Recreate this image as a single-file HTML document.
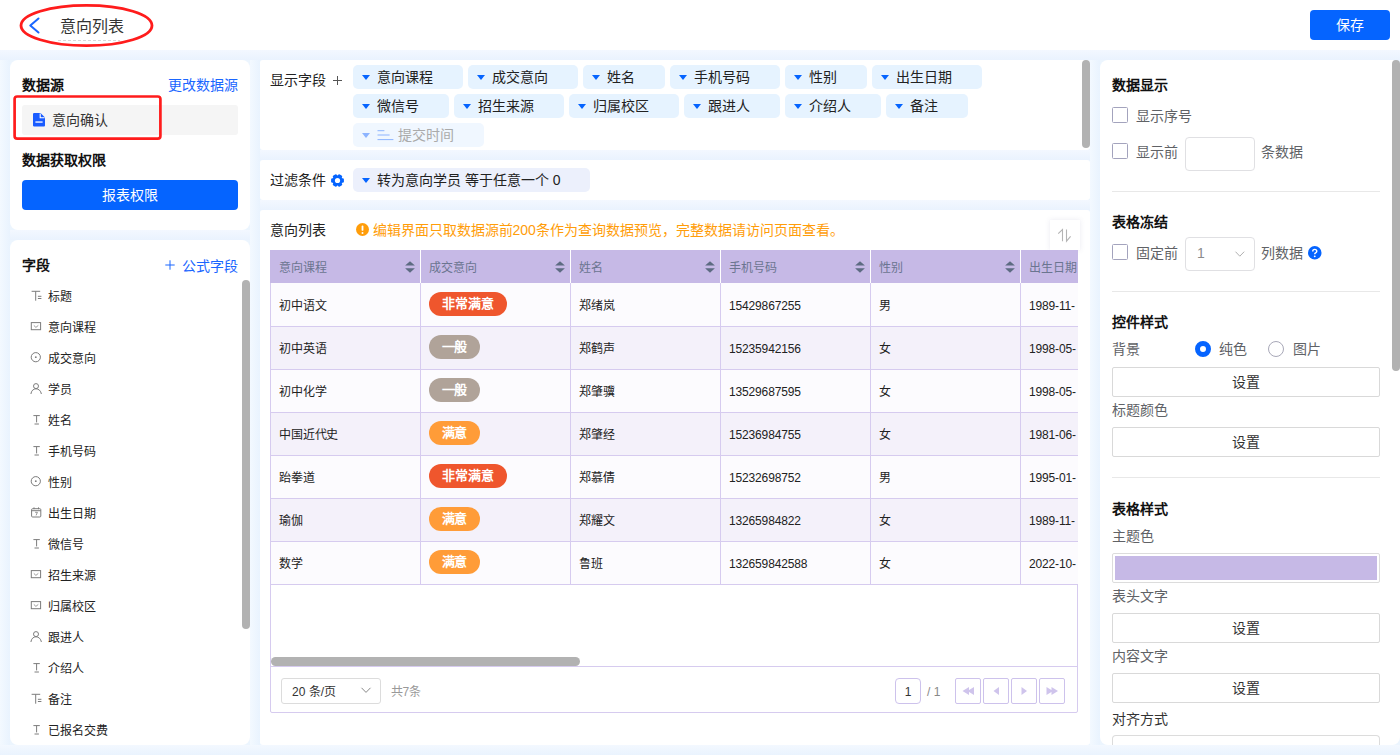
<!DOCTYPE html>
<html lang="zh-CN">
<head>
<meta charset="utf-8">
<title>意向列表</title>
<style>
*{box-sizing:border-box;margin:0;padding:0}
html,body{width:1400px;height:755px;overflow:hidden}
body{position:relative;background:#ecf5fe;font-family:"Liberation Sans",sans-serif;font-size:14px;color:#222;line-height:1}
.a{position:absolute}
.t{position:absolute;white-space:nowrap;height:20px;line-height:20px}
.b{font-weight:bold;color:#111}
.blue{color:#1a66ff}
.panel{position:absolute;background:#fff;border-radius:8px}
.mp{position:absolute;background:#fff;border-radius:3px;left:260px;width:830px}
svg{position:absolute;overflow:visible}
/* header */
#hdr{left:0;top:0;width:1400px;height:50px;background:#fff}
.vs{position:absolute;top:50px;width:10px;height:705px;background:linear-gradient(90deg,#f3f9ff,#e9f3fe)}
.hs{position:absolute;height:10px;background:linear-gradient(#f3f8ff,#eaf3fe)}
.btnblue{position:absolute;background:#0564ff;color:#fff;border-radius:4px;text-align:center;font-size:14px}
/* field list */
.fi{position:absolute;left:48px;font-size:12px;height:20px;line-height:20px;color:#222;white-space:nowrap}
.ic{left:30px;width:12px;height:12px}
.ic *{fill:none;stroke:#7c7c7c;stroke-width:1}
/* chips */
.chip{position:absolute;height:24px;line-height:24px;border-radius:5px;background:#e6f3ff;font-size:14px;color:#222;padding-left:24px;white-space:nowrap}
.chip:before{content:"";position:absolute;left:8.5px;top:10px;border-left:4.5px solid transparent;border-right:4.5px solid transparent;border-top:5px solid #0564ff}
.chip.dis{background:#f0f7ff;color:#aaa}
.chip.dis:before{border-top-color:#8db4ff}
/* table */
.th{position:absolute;top:250px;height:33px;line-height:37px;width:150px;background:#c6b9e6;border-right:1px solid #fff;font-size:12px;color:#6b7590;padding-left:8px;white-space:nowrap;overflow:hidden}
.td{position:absolute;height:43px;line-height:44px;width:150px;border-right:1px solid #d6cbef;border-bottom:1px solid #d6cbef;font-size:12px;color:#222;padding-left:8px;white-space:nowrap;overflow:hidden}
.td{letter-spacing:-.15px}.odd{background:#fcfbfe}.even{background:#f4f1fa}
.tag{position:absolute;left:8px;top:8px;height:24px;line-height:24px;border-radius:12px;color:#fff;font-weight:bold;font-size:13px;text-align:center}
.tr{background:#ef562d;width:78px}.tg{background:#b0a399;width:51px}.to{background:#ff9c38;width:51px}
.srt{top:10.5px;width:10px;height:12px}
.pg{position:absolute;top:678px;width:26px;height:26px;border:1px solid #cdc2ec;border-radius:2px}
/* right */
.lab{position:absolute;white-space:nowrap;height:20px;line-height:20px;color:#606266;font-size:14px}
.cb{position:absolute;left:1112px;width:16px;height:16px;border:1px solid #a3a3bd;border-radius:1.5px;background:#fff}
.hr{position:absolute;left:1112px;width:268px;height:1px;background:#e8e8e8}
.setb{position:absolute;left:1112px;width:268px;height:30px;line-height:28px;border:1px solid #d9d9d9;border-radius:2px;text-align:center;font-size:14px;color:#333;background:#fff}
</style>
</head>
<body>
<!-- ===== header ===== -->
<div class="a" id="hdr"></div>
<div class="vs" style="left:0"></div><div class="vs" style="left:250px"></div><div class="vs" style="left:1090px"></div>
<div class="hs" style="left:0;top:50px;width:1400px"></div><div class="hs" style="left:260px;top:150px;width:830px"></div><div class="hs" style="left:260px;top:200px;width:830px"></div><div class="hs" style="left:10px;top:230px;width:240px"></div><div class="hs" style="left:0;top:745px;width:1400px"></div>
<svg class="a" style="left:0;top:0" width="180" height="50">
  <polyline points="38.5,18.5 30.3,25.5 38.5,32.5" fill="none" stroke="#1a66ff" stroke-width="2" stroke-linecap="round" stroke-linejoin="round"/>
  <line x1="58" y1="40.5" x2="120" y2="40.5" stroke="#d8d8d8" stroke-width="1" stroke-dasharray="3,2"/>
  <ellipse cx="86.5" cy="25.5" rx="65.5" ry="20.2" fill="none" stroke="#ff1c1c" stroke-width="2.8"/>
</svg>
<div class="t" style="left:60px;top:17px;font-size:16px;color:#333">意向列表</div>
<div class="btnblue" style="left:1310px;top:10px;width:80px;height:30px;line-height:30px">保存</div>

<!-- ===== left panel 1 ===== -->
<div class="panel" style="left:10px;top:60px;width:240px;height:170px"></div>
<div class="t b" style="left:22px;top:75px">数据源</div>
<div class="t blue" style="left:168px;top:75px">更改数据源</div>
<div class="a" style="left:22px;top:105px;width:216px;height:30px;background:#f5f5f5;border-radius:3px"></div>
<svg class="a" style="left:33px;top:113px" width="12" height="14" viewBox="0 0 12 14">
  <path d="M1.2 0H7.5L12 4.5V12.6Q12 13.6 11 13.6H1.2Q0 13.6 0 12.6V1Q0 0 1.2 0Z" fill="#1a5cff"/>
  <path d="M7.2 0.6V4.8H11.6" fill="none" stroke="#fff" stroke-width="1.1"/>
  <rect x="2.4" y="8.4" width="7.2" height="1.3" fill="#fff"/>
</svg>
<div class="t" style="left:52px;top:110px;color:#333">意向确认</div>
<svg class="a" style="left:0;top:90px" width="170" height="56"><rect x="14.6" y="6.5" width="145.8" height="42.2" rx="2.6" fill="none" stroke="#ff1c1c" stroke-width="2.7"/></svg>
<div class="t b" style="left:22px;top:150px">数据获取权限</div>
<div class="btnblue" style="left:22px;top:180px;width:216px;height:30px;line-height:30px">报表权限</div>

<!-- ===== left panel 2 ===== -->
<div class="panel" style="left:10px;top:240px;width:240px;height:505px"></div>
<div class="t b" style="left:22px;top:254.5px">字段</div>
<svg class="a" style="left:165px;top:260px" width="10" height="10"><path d="M5 0.3V9.7M0.3 5H9.7" stroke="#1a66ff" stroke-width="1" fill="none"/></svg>
<div class="t blue" style="left:182px;top:255.5px">公式字段</div>
<div class="a" style="left:242px;top:280px;width:8px;height:349px;background:#b2b2b2;border-radius:4px"></div>
<svg class="a" width="0" height="0" style="left:0;top:0"><defs>
<symbol id="tt" viewBox="0 0 12 12"><path d="M1.6 2.3H10.2M5.7 2.3V11.7M7.9 7.3H11.4M7.9 9.5H11.4"/></symbol>
<symbol id="dd" viewBox="0 0 12 12"><rect x="1.3" y="2.6" width="9.3" height="7.1"/><path d="M3.8 5.4L5.9 7.4L8.3 5.4" style="stroke:#9a9a9a"/></symbol>
<symbol id="rd" viewBox="0 0 12 12"><circle cx="5.8" cy="6.2" r="4.6"/><circle cx="5.8" cy="6.2" r="0.9" style="fill:#7c7c7c;stroke:none"/></symbol>
<symbol id="us" viewBox="0 0 12 12"><circle cx="6" cy="4.1" r="2.5"/><path d="M0.9 12C1.3 8.6 3.5 6.8 6 6.8S10.8 8.6 11.4 12"/></symbol>
<symbol id="tx" viewBox="0 0 12 12"><path d="M3.4 2.6H9.8M6.6 2.6V9.4M4.5 11H8.9"/></symbol>
<symbol id="dt" viewBox="0 0 12 12"><rect x="1.6" y="2.7" width="9.2" height="8.3" rx="1"/><path d="M1.6 4.7H10.8M4 1.4V3.2M8.5 1.4V3.2"/><path d="M5.1 6.3H7.4L6.1 9.4" style="stroke-width:.8"/></symbol>
</defs></svg>
<svg class="a ic" style="top:289px"><use href="#tt"/></svg><div class="fi" style="top:287px">标题</div>
<svg class="a ic" style="top:320px"><use href="#dd"/></svg><div class="fi" style="top:318px">意向课程</div>
<svg class="a ic" style="top:351px"><use href="#rd"/></svg><div class="fi" style="top:349px">成交意向</div>
<svg class="a ic" style="top:382px"><use href="#us"/></svg><div class="fi" style="top:380px">学员</div>
<svg class="a ic" style="top:413px"><use href="#tx"/></svg><div class="fi" style="top:411px">姓名</div>
<svg class="a ic" style="top:444px"><use href="#tx"/></svg><div class="fi" style="top:442px">手机号码</div>
<svg class="a ic" style="top:475px"><use href="#rd"/></svg><div class="fi" style="top:473px">性别</div>
<svg class="a ic" style="top:506px"><use href="#dt"/></svg><div class="fi" style="top:504px">出生日期</div>
<svg class="a ic" style="top:537px"><use href="#tx"/></svg><div class="fi" style="top:535px">微信号</div>
<svg class="a ic" style="top:568px"><use href="#dd"/></svg><div class="fi" style="top:566px">招生来源</div>
<svg class="a ic" style="top:599px"><use href="#dd"/></svg><div class="fi" style="top:597px">归属校区</div>
<svg class="a ic" style="top:630px"><use href="#us"/></svg><div class="fi" style="top:628px">跟进人</div>
<svg class="a ic" style="top:661px"><use href="#tx"/></svg><div class="fi" style="top:659px">介绍人</div>
<svg class="a ic" style="top:692px"><use href="#tt"/></svg><div class="fi" style="top:690px">备注</div>
<svg class="a ic" style="top:723px"><use href="#tx"/></svg><div class="fi" style="top:721px">已报名交费</div>

<div class="mp" style="top:60px;height:90px"></div>
<div class="mp" style="top:160px;height:40px"></div>
<div class="mp" style="top:210px;height:535px"></div>
<div class="t" style="left:270px;top:69.5px">显示字段</div>
<svg class="a" style="left:333px;top:75.5px" width="9" height="9"><path d="M4.5 0V9M0 4.5H9" stroke="#555" stroke-width="1" fill="none"/></svg>
<div class="chip" style="left:353px;top:65px;width:110px">意向课程</div>
<div class="chip" style="left:468px;top:65px;width:110px">成交意向</div>
<div class="chip" style="left:583px;top:65px;width:82px">姓名</div>
<div class="chip" style="left:670px;top:65px;width:110px">手机号码</div>
<div class="chip" style="left:785px;top:65px;width:82px">性别</div>
<div class="chip" style="left:872px;top:65px;width:110px">出生日期</div>
<div class="chip" style="left:353px;top:94px;width:96px">微信号</div>
<div class="chip" style="left:454px;top:94px;width:110px">招生来源</div>
<div class="chip" style="left:569px;top:94px;width:110px">归属校区</div>
<div class="chip" style="left:684px;top:94px;width:96px">跟进人</div>
<div class="chip" style="left:785px;top:94px;width:96px">介绍人</div>
<div class="chip" style="left:886px;top:94px;width:82px">备注</div>
<div class="chip dis" style="left:353px;top:123px;width:131px;padding-left:44.5px">提交时间</div>
<svg class="a" style="left:377px;top:130px" width="17" height="11"><path d="M0.5 0.7H7.4M0.5 5H12.6M0.5 9.6H16.4" stroke="#8db4ff" stroke-width="1" fill="none"/></svg>
<div class="a" style="left:1082px;top:60px;width:8px;height:88px;background:#b2b2b2;border-radius:4px"></div>
<div class="t" style="left:270px;top:170px">过滤条件</div>
<svg class="a" style="left:331px;top:173.5px" width="13" height="13" viewBox="-6.5 -6.5 13 13"><g fill="#0564ff"><circle r="4.9"/><g id="gt"><rect x="-6.4" y="-2.3" width="12.8" height="4.6" rx="1.3"/></g><use href="#gt" transform="rotate(60)"/><use href="#gt" transform="rotate(120)"/></g><circle r="2.6" fill="#fff"/></svg>
<div class="chip" style="left:353px;top:168px;width:237px;background:#ecf0fc">转为意向学员 等于任意一个 0</div>
<div class="t" style="left:270px;top:220px">意向列表</div>
<svg class="a" style="left:356px;top:223.3px" width="13" height="13" viewBox="0 0 13 13"><circle cx="6.5" cy="6.5" r="6.5" fill="#ff9d0a"/><rect x="5.6" y="2.6" width="1.8" height="5.2" rx=".9" fill="#fff"/><circle cx="6.5" cy="9.9" r="1" fill="#fff"/></svg>
<div class="t" style="left:372.5px;top:220px;color:#ff9d0a">编辑界面只取数据源前200条作为查询数据预览，完整数据请访问页面查看。</div>
<div class="a" style="left:1050px;top:220px;width:30px;height:30px;background:#fff;box-shadow:0 0 5px rgba(120,120,160,.16)"></div>
<svg class="a" style="left:1050px;top:220px" width="30" height="30"><path d="M12.5 21.2V9.6L8.2 13.6M16.5 9.6V21.2L20.6 16.4" fill="none" stroke="#b4b4b4" stroke-width="1.1"/></svg>
<div class="a" style="left:270px;top:250px;width:808px;height:463px;border:1px solid #d6cbef;border-radius:0 0 2px 2px;background:#fff"></div>
<div class="a" id="tbl" style="left:270px;top:0;width:807.5px;height:755px;overflow:hidden">
<div class="th" style="left:0;width:151px;padding-left:9px">意向课程<svg class="a srt" style="left:135px" viewBox="0 0 10 12"><path d="M5 0.3L9.9 4.6H0.1ZM0.1 7.2H9.9L5 11.7Z" fill="#5d6b82"/></svg></div>
<div class="th" style="left:151px">成交意向<svg class="a srt" style="left:134px" viewBox="0 0 10 12"><path d="M5 0.3L9.9 4.6H0.1ZM0.1 7.2H9.9L5 11.7Z" fill="#5d6b82"/></svg></div>
<div class="th" style="left:301px">姓名<svg class="a srt" style="left:134px" viewBox="0 0 10 12"><path d="M5 0.3L9.9 4.6H0.1ZM0.1 7.2H9.9L5 11.7Z" fill="#5d6b82"/></svg></div>
<div class="th" style="left:451px">手机号码<svg class="a srt" style="left:134px" viewBox="0 0 10 12"><path d="M5 0.3L9.9 4.6H0.1ZM0.1 7.2H9.9L5 11.7Z" fill="#5d6b82"/></svg></div>
<div class="th" style="left:601px">性别<svg class="a srt" style="left:134px" viewBox="0 0 10 12"><path d="M5 0.3L9.9 4.6H0.1ZM0.1 7.2H9.9L5 11.7Z" fill="#5d6b82"/></svg></div>
<div class="th" style="left:751px">出生日期<svg class="a srt" style="left:134px" viewBox="0 0 10 12"><path d="M5 0.3L9.9 4.6H0.1ZM0.1 7.2H9.9L5 11.7Z" fill="#5d6b82"/></svg></div>
<div class="td odd" style="left:0;top:284px;width:151px;border-left:1px solid #d6cbef;">初中语文</div>
<div class="td odd" style="left:151px;top:284px;"><span class="tag tr">非常满意</span></div>
<div class="td odd" style="left:301px;top:284px;">郑绪岚</div>
<div class="td odd" style="left:451px;top:284px;">15429867255</div>
<div class="td odd" style="left:601px;top:284px;">男</div>
<div class="td odd" style="left:751px;top:284px;">1989-11-</div>
<div class="td even" style="left:0;top:327px;width:151px;border-left:1px solid #d6cbef;">初中英语</div>
<div class="td even" style="left:151px;top:327px;"><span class="tag tg">一般</span></div>
<div class="td even" style="left:301px;top:327px;">郑鹤声</div>
<div class="td even" style="left:451px;top:327px;">15235942156</div>
<div class="td even" style="left:601px;top:327px;">女</div>
<div class="td even" style="left:751px;top:327px;">1998-05-</div>
<div class="td odd" style="left:0;top:370px;width:151px;border-left:1px solid #d6cbef;">初中化学</div>
<div class="td odd" style="left:151px;top:370px;"><span class="tag tg">一般</span></div>
<div class="td odd" style="left:301px;top:370px;">郑肇骥</div>
<div class="td odd" style="left:451px;top:370px;">13529687595</div>
<div class="td odd" style="left:601px;top:370px;">女</div>
<div class="td odd" style="left:751px;top:370px;">1998-05-</div>
<div class="td even" style="left:0;top:413px;width:151px;border-left:1px solid #d6cbef;">中国近代史</div>
<div class="td even" style="left:151px;top:413px;"><span class="tag to">满意</span></div>
<div class="td even" style="left:301px;top:413px;">郑肇经</div>
<div class="td even" style="left:451px;top:413px;">15236984755</div>
<div class="td even" style="left:601px;top:413px;">女</div>
<div class="td even" style="left:751px;top:413px;">1981-06-</div>
<div class="td odd" style="left:0;top:456px;width:151px;border-left:1px solid #d6cbef;">跆拳道</div>
<div class="td odd" style="left:151px;top:456px;"><span class="tag tr">非常满意</span></div>
<div class="td odd" style="left:301px;top:456px;">郑慕倩</div>
<div class="td odd" style="left:451px;top:456px;">15232698752</div>
<div class="td odd" style="left:601px;top:456px;">男</div>
<div class="td odd" style="left:751px;top:456px;">1995-01-</div>
<div class="td even" style="left:0;top:499px;width:151px;border-left:1px solid #d6cbef;">瑜伽</div>
<div class="td even" style="left:151px;top:499px;"><span class="tag to">满意</span></div>
<div class="td even" style="left:301px;top:499px;">郑耀文</div>
<div class="td even" style="left:451px;top:499px;">13265984822</div>
<div class="td even" style="left:601px;top:499px;">女</div>
<div class="td even" style="left:751px;top:499px;">1989-11-</div>
<div class="td odd" style="left:0;top:542px;width:151px;border-left:1px solid #d6cbef;">数学</div>
<div class="td odd" style="left:151px;top:542px;"><span class="tag to">满意</span></div>
<div class="td odd" style="left:301px;top:542px;">鲁班</div>
<div class="td odd" style="left:451px;top:542px;">132659842588</div>
<div class="td odd" style="left:601px;top:542px;">女</div>
<div class="td odd" style="left:751px;top:542px;">2022-10-</div>
<div class="a" style="left:0;top:283px;width:808px;height:1px;background:#fcfbfe"></div>
<div class="a" style="left:0px;top:283px;width:1px;height:1px;background:#d6cbef"></div>
<div class="a" style="left:150px;top:283px;width:1px;height:1px;background:#d6cbef"></div>
<div class="a" style="left:300px;top:283px;width:1px;height:1px;background:#d6cbef"></div>
<div class="a" style="left:450px;top:283px;width:1px;height:1px;background:#d6cbef"></div>
<div class="a" style="left:600px;top:283px;width:1px;height:1px;background:#d6cbef"></div>
<div class="a" style="left:750px;top:283px;width:1px;height:1px;background:#d6cbef"></div>
</div>
<div class="a" style="left:271px;top:657px;width:309px;height:9px;background:#b2b2b2;border-radius:4.5px"></div>
<div class="a" style="left:271px;top:666px;width:806px;height:1px;background:#d6cbef"></div>
<div class="a" style="left:281px;top:678px;width:100px;height:26px;border:1px solid #dcdcdc;border-radius:3px;background:#fff"></div>
<div class="t" style="left:292px;top:682px;font-size:12px;color:#333">20 条/页</div>
<svg class="a" style="left:361px;top:687px" width="10" height="7"><path d="M0.5 0.8L5 5.4L9.5 0.8" fill="none" stroke="#888" stroke-width="1"/></svg>
<div class="t" style="left:390.5px;top:682px;font-size:12px;color:#999">共7条</div>
<div class="pg" style="left:895px;border-radius:4px;text-align:center;line-height:26px;font-size:12px;color:#333">1</div>
<div class="t" style="left:927px;top:682px;font-size:12px;color:#888">/ 1</div>
<div class="pg" style="left:955px"><svg class="a" style="left:6px;top:8px" width="12" height="8" fill="#cfc4ec"><path d="M7 0L0.5 4L7 8ZM12 0L5.5 4L12 8Z"/></svg></div>
<div class="pg" style="left:983px"><svg class="a" style="left:6px;top:8px" width="12" height="8" fill="#cfc4ec"><path d="M9 0L3.5 4L9 8Z"/></svg></div>
<div class="pg" style="left:1011px"><svg class="a" style="left:6px;top:8px" width="12" height="8" fill="#cfc4ec"><path d="M3.5 0L9 4L3.5 8Z"/></svg></div>
<div class="pg" style="left:1039px"><svg class="a" style="left:6px;top:8px" width="12" height="8" fill="#cfc4ec"><path d="M0.5 0L7 4L0.5 8ZM5.5 0L12 4L5.5 8Z"/></svg></div>

<div class="panel" style="left:1100px;top:60px;width:300px;height:685px"></div>
<div class="a" style="left:1392px;top:60px;width:8px;height:310.5px;background:#b2b2b2;border-radius:4px"></div>
<div class="t b" style="left:1112px;top:75px;">数据显示</div>
<div class="cb" style="top:107px"></div>
<div class="lab" style="left:1136px;top:106px;">显示序号</div>
<div class="cb" style="top:143px"></div>
<div class="lab" style="left:1136px;top:141.5px;">显示前</div>
<div class="a" style="left:1185px;top:137px;width:70px;height:33.5px;border:1px solid #e0e0e3;border-radius:4px;background:#fff"></div>
<div class="lab" style="left:1260.5px;top:141.5px;">条数据</div>
<div class="hr" style="top:191px"></div>
<div class="t b" style="left:1112px;top:212px;">表格冻结</div>
<div class="cb" style="top:244px"></div>
<div class="lab" style="left:1136px;top:243px;">固定前</div>
<div class="a" style="left:1185px;top:237px;width:70px;height:33.5px;border:1px solid #e0e0e3;border-radius:4px;background:#fff"></div>
<div class="lab" style="left:1197px;top:243px;color:#8c8c8c">1</div>
<svg class="a" style="left:1234.5px;top:251px" width="10" height="7"><path d="M0.5 0.7L4.8 5.2L9.2 0.7" fill="none" stroke="#b0b0b0" stroke-width="1"/></svg>
<div class="lab" style="left:1260.5px;top:243px;">列数据</div>
<svg class="a" style="left:1307.5px;top:246.2px" width="13.5" height="13.5" viewBox="0 0 14 14"><circle cx="7" cy="7" r="7" fill="#0564ff"/><path d="M4.9 5.6Q4.9 3.5 7 3.5Q9.1 3.5 9.1 5.4Q9.1 6.5 7.9 7.1Q7 7.6 7 8.6" fill="none" stroke="#fff" stroke-width="1.5"/><circle cx="7" cy="10.7" r=".95" fill="#fff"/></svg>
<div class="hr" style="top:291px"></div>
<div class="t b" style="left:1112px;top:312px;">控件样式</div>
<div class="lab" style="left:1112px;top:338.5px;">背景</div>
<div class="a" style="left:1195px;top:340.5px;width:16px;height:16px;border-radius:8px;border:5px solid #0564ff;background:#fff"></div>
<div class="lab" style="left:1219px;top:338.5px;">纯色</div>
<div class="a" style="left:1268px;top:340.5px;width:16px;height:16px;border-radius:8px;border:1px solid #a8a8b8;background:#fff"></div>
<div class="lab" style="left:1293px;top:338.5px;">图片</div>
<div class="setb" style="top:367px">设置</div>
<div class="lab" style="left:1112px;top:400px;">标题颜色</div>
<div class="setb" style="top:427px">设置</div>
<div class="hr" style="top:477px"></div>
<div class="t b" style="left:1112px;top:498.5px;">表格样式</div>
<div class="lab" style="left:1112px;top:526px;">主题色</div>
<div class="a" style="left:1112px;top:553px;width:268px;height:30px;border:1px solid #dcdcdc;border-radius:2px;background:#fff"><div class="a" style="left:2px;top:2px;right:2px;bottom:2px;background:#c6b9e6"></div></div>
<div class="lab" style="left:1112px;top:585.5px;">表头文字</div>
<div class="setb" style="top:613px">设置</div>
<div class="lab" style="left:1112px;top:645.5px;">内容文字</div>
<div class="setb" style="top:673px">设置</div>
<div class="lab" style="left:1112px;top:709px;color:#333">对齐方式</div>
<div class="a" style="left:1112px;top:735px;width:268px;height:10px;border:1px solid #dcdcdc;border-bottom:none;border-radius:4px 4px 0 0;background:#fff"></div>
</body>
</html>
